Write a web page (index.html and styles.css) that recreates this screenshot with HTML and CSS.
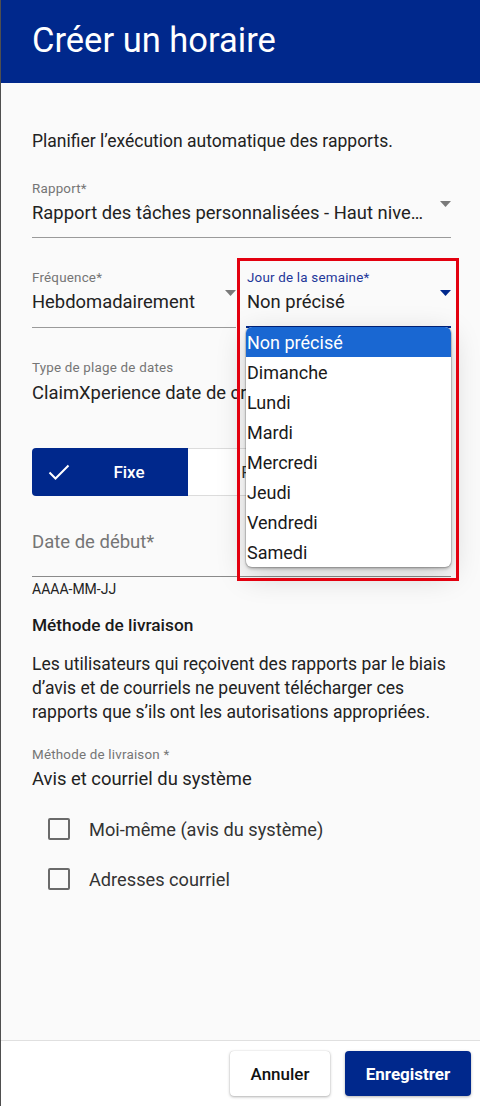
FILE: index.html
```html
<!DOCTYPE html>
<html lang="fr">
<head>
<meta charset="utf-8">
<title>Créer un horaire</title>
<link rel="stylesheet" href="styles.css">
</head>
<body>
<div class="page">
  <header class="header">
    <h1 class="title">Créer un horaire</h1>
  </header>
  <main class="main">
    <p class="intro">Planifier l’exécution automatique des rapports.</p>

    <div class="field field-rapport">
      <div class="label">Rapport*</div>
      <div class="value-row">
        <span class="value ellipsis">Rapport des tâches personnalisées - Haut nive…</span>
        <svg class="arrow" width="11" height="6" viewBox="0 0 11 6"><path d="M0 0H11L5.5 6Z" fill="#7a7a7a"/></svg>
      </div>
    </div>

    <div class="row-two">
      <div class="field field-freq">
        <div class="label">Fréquence*</div>
        <div class="value-row">
          <span class="value">Hebdomadairement</span>
          <svg class="arrow" width="11" height="6" viewBox="0 0 11 6"><path d="M0 0H11L5.5 6Z" fill="#7a7a7a"/></svg>
        </div>
      </div>
      <div class="field field-jour">
        <div class="label label-active">Jour de la semaine*</div>
        <div class="value-row">
          <span class="value">Non précisé</span>
          <svg class="arrow" width="11" height="6" viewBox="0 0 11 6"><path d="M0 0H11L5.5 6Z" fill="#00288c"/></svg>
        </div>
        <ul class="listbox">
          <li class="option selected">Non précisé</li>
          <li class="option">Dimanche</li>
          <li class="option">Lundi</li>
          <li class="option">Mardi</li>
          <li class="option">Mercredi</li>
          <li class="option">Jeudi</li>
          <li class="option">Vendredi</li>
          <li class="option">Samedi</li>
        </ul>
        <div class="highlight-box"></div>
      </div>
    </div>

    <div class="field field-type">
      <div class="label">Type de plage de dates</div>
      <div class="value-row">
        <span class="value">ClaimXperience date de création</span>
      </div>
    </div>

    <div class="toggle">
      <div class="seg seg-on">
        <svg class="check" width="22" height="16" viewBox="0 0 22 16"><path d="M1.5 8.5L7.5 14.5L20.5 1.5" fill="none" stroke="#fff" stroke-width="2"/></svg>
        <span class="seg-text">Fixe</span>
      </div>
      <div class="seg seg-off"><span>Relatif</span></div>
    </div>

    <div class="date-field">
      <div class="placeholder">Date de début*</div>
    </div>
    <div class="hint">AAAA-MM-JJ</div>

    <h2 class="section-title">Méthode de livraison</h2>
    <p class="para">Les utilisateurs qui reçoivent des rapports par le biais d’avis et de courriels ne peuvent télécharger ces rapports que s’ils ont les autorisations appropriées.</p>

    <div class="field field-method">
      <div class="label">Méthode de livraison *</div>
      <div class="value-row">
        <span class="value">Avis et courriel du système</span>
      </div>
    </div>

    <div class="checks">
      <label class="check-row"><span class="box"></span><span class="check-label">Moi-même (avis du système)</span></label>
      <label class="check-row"><span class="box"></span><span class="check-label">Adresses courriel</span></label>
    </div>
  </main>
  <footer class="footer">
    <button class="btn btn-cancel">Annuler</button>
    <button class="btn btn-save">Enregistrer</button>
  </footer>
</div>
</body>
</html>
```

FILE: styles.css
```css
* { box-sizing: border-box; }

html, body {
  margin: 0;
  padding: 0;
}

body {
  font-family: Roboto, "Noto Sans", "Liberation Sans", sans-serif;
  color: #212121;
  background: #fafafa;
}

.page {
  width: 480px;
  height: 1106px;
  display: flex;
  flex-direction: column;
  border-left: 1px solid #4f4f4f;
  overflow: hidden;
}

.header {
  height: 83px;
  flex: none;
  background: #00288c;
  display: flex;
  align-items: center;
  padding-left: 31px;
}

.title {
  margin: 0;
  color: #fff;
  font-weight: 400;
  font-size: 34.5px;
  line-height: 40px;
  padding-bottom: 3px;
}

.main {
  flex: 1;
  background: #fafafa;
  padding: 46px 29px 0 31px;
  display: flex;
  flex-direction: column;
}

.intro {
  margin: 0;
  font-size: 17.5px;
  line-height: 24px;
  color: #222;
}

.field {
  display: flex;
  flex-direction: column;
}

.label {
  font-size: 13.4px;
  line-height: 16px;
  color: #757575;
  letter-spacing: 0.2px;
}

.label-active {
  color: #1e3799;
}

.value-row {
  display: flex;
  align-items: flex-start;
  margin-top: 4px;
  gap: 10px;
}

.value {
  flex: 1;
  min-width: 0;
  font-size: 18.4px;
  line-height: 24px;
  color: #222;
  white-space: nowrap;
}

.ellipsis {
  overflow: hidden;
  text-overflow: ellipsis;
}

.arrow {
  flex: none;
}

.field-rapport {
  margin-top: 28px;
  padding-bottom: 12px;
  border-bottom: 1px solid #9a9a9a;
}

.field-rapport .value-row {
  gap: 6px;
}

.row-two {
  display: flex;
  gap: 10px;
  margin-top: 32px;
}

.field-freq {
  width: 204px;
  padding-bottom: 12px;
  border-bottom: 1px solid #9a9a9a;
}

.field-jour {
  flex: 1;
  position: relative;
  padding-bottom: 12px;
  border-bottom: 2px solid #00288c;
}

.field-jour .label,
.field-jour .value {
  padding-left: 1px;
}

.listbox {
  position: absolute;
  top: calc(100% + 1px);
  left: 0;
  right: 0;
  margin: 0;
  padding: 0;
  list-style: none;
  background: #fff;
  border-radius: 6px;
  overflow: hidden;
  box-shadow: 0 0 0 1px rgba(0, 0, 0, 0.12), 0 2px 3px rgba(0, 0, 0, 0.25), 0 8px 30px rgba(0, 0, 0, 0.18);
  z-index: 2;
}

.option {
  height: 30px;
  line-height: 31px;
  font-size: 18px;
  padding-left: 1px;
  color: #1a1a1a;
}

.option.selected {
  background: #1967d2;
  color: #fff;
}

.highlight-box {
  position: absolute;
  left: -9px;
  top: -12px;
  right: -8px;
  bottom: -255px;
  border: 3px solid #e3000f;
  z-index: 3;
  pointer-events: none;
}

.field-type {
  margin-top: 32px;
}

.field-type .value-row {
  margin-top: 5px;
}

.toggle {
  display: flex;
  margin-top: 43px;
  height: 48px;
}

.seg {
  flex: 0 0 156px;
  display: flex;
  align-items: center;
  justify-content: center;
  font-size: 17px;
  font-weight: 500;
}

.seg-on {
  background: #00288c;
  color: #fff;
  border-radius: 4px 0 0 4px;
  padding-left: 16px;
  justify-content: flex-start;
}

.seg-on .check {
  flex: none;
}

.seg-text {
  flex: 1;
  text-align: center;
}

.seg-off {
  background: #fff;
  color: #333;
  font-weight: 400;
  border: 1px solid #dcdcdc;
  border-left: none;
  border-radius: 0 4px 4px 0;
}

.date-field {
  margin-top: 34px;
  padding-bottom: 22px;
  border-bottom: 1px solid #8a8a8a;
}

.placeholder {
  font-size: 18.5px;
  line-height: 24px;
  color: #757575;
}

.hint {
  margin-top: 4px;
  font-size: 14px;
  line-height: 16px;
  color: #222;
}

.section-title {
  margin: 16px 0 0;
  font-size: 17.3px;
  font-weight: 500;
  line-height: 24px;
  color: #1a1a1a;
}

.para {
  margin: 15px 0 0;
  font-size: 17.5px;
  line-height: 24px;
  color: #222;
}

.field-method {
  margin-top: 23px;
}

.checks {
  margin-top: 13px;
  display: flex;
  flex-direction: column;
}

.check-row {
  height: 50px;
  display: flex;
  align-items: center;
  padding-left: 16px;
}

.box {
  width: 22px;
  height: 22px;
  border: 2px solid #6a6a6a;
  border-radius: 2px;
  background: transparent;
}

.check-label {
  margin-left: 19px;
  font-size: 18.2px;
  color: #333;
}

.footer {
  flex: none;
  height: 66px;
  background: #fff;
  border-top: 1px solid #e0e0e0;
  display: flex;
  justify-content: flex-end;
  align-items: flex-start;
  padding: 10px 9px 0 0;
  gap: 15px;
}

.btn {
  height: 45px;
  border-radius: 4px;
  border: none;
  font-family: Roboto, "Noto Sans", sans-serif;
  font-size: 17px;
  font-weight: 500;
  cursor: pointer;
}

.btn-cancel {
  width: 100px;
  background: #fff;
  color: #111;
  box-shadow: 0 1px 3px rgba(0, 0, 0, 0.3), 0 0 1px rgba(0, 0, 0, 0.2);
}

.btn-save {
  width: 126px;
  background: #00288c;
  color: #fff;
  font-weight: 700;
  box-shadow: 0 1px 3px rgba(0, 0, 0, 0.3);
}
```
